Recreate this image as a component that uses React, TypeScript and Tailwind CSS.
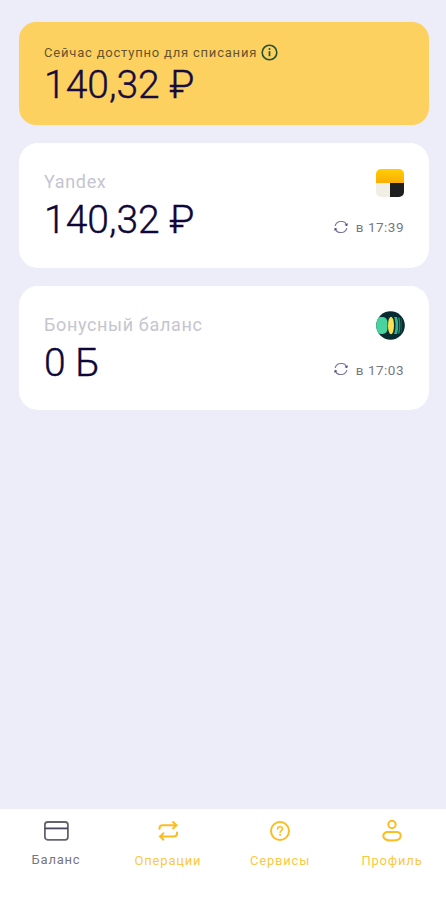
import React from 'react';
import { clsx } from 'clsx';

interface BalanceCardProps {
  title: string;
  amount: string;
  updatedAt: string;
  logo: React.ReactNode;
}

interface NavItemProps {
  label: string;
  icon: React.ReactNode;
  active?: boolean;
}

const InfoIcon = () => (
  <svg className="mb-px h-[17px] w-[17px]" viewBox="0 0 17 17" fill="none" stroke="#23502f" strokeWidth="1.6">
    <circle cx="8.5" cy="8.5" r="7.3" />
    <path d="M8.5 7.2v5" strokeWidth="1.7" />
    <circle cx="8.5" cy="4.9" r="1" fill="#23502f" stroke="none" />
  </svg>
);

const RefreshIcon = () => (
  <svg className="mb-px h-[14px] w-[14px]" viewBox="0 0 14 14" fill="none" stroke="#77749c" strokeWidth="1.2">
    <path d="M1.2 5.8c.2-1 .6-1.800 1.300-2.500C3.400 2.200 4.600 1.500 6 1.500h2c1.900 0 3.500 1.100 4.300 2.800" />
    <path d="M12.800 8.200c-.2 1-.6 1.800-1.300 2.500-.9 1.100-2.100 1.800-3.500 1.800H6c-1.900 0-3.500-1.100-4.300-2.800" />
    <path d="M13.900 3.300l-.7 3-2.800-1.300zM.1 10.700l.7-3L3.600 9z" fill="#4b4678" stroke="none" />
  </svg>
);

const YandexLogo = () => (
  <svg className="h-7 w-7" viewBox="0 0 28 28">
    <defs>
      <linearGradient id="yandexTop" x1="0" y1="0" x2="0" y2="1">
        <stop offset="0" stopColor="#ffcf00" />
        <stop offset="1" stopColor="#fbad08" />
      </linearGradient>
    </defs>
    <path d="M0 14V5a5 5 0 0 1 5-5h18a5 5 0 0 1 5 5v9z" fill="url(#yandexTop)" />
    <path d="M0 14h14v14H5a5 5 0 0 1-5-5z" fill="#f1eee6" />
    <path d="M14 14h14v9a5 5 0 0 1-5 5h-9z" fill="#1f1f1f" />
  </svg>
);

const BonusLogo = () => (
  <svg className="-mr-px h-[29px] w-[29px]" viewBox="0 0 29 29">
    <defs>
      <clipPath id="bonusClip">
        <circle cx="14.5" cy="14.5" r="14.3" />
      </clipPath>
    </defs>
    <g clipPath="url(#bonusClip)">
      <rect width="29" height="29" fill="#062c30" />
      <rect x="0" y="6" width="11.5" height="17" rx="5" fill="#48d3a0" />
      <ellipse cx="15" cy="14.5" rx="3" ry="8.7" fill="#fbe253" />
      <path d="M18 6c2 4.500 2 12.500 0 17h3c1.600-5 1.600-12 0-17z" fill="#35b28c" />
      <path d="M22 6.500c1.300 5 1.300 11 0 16h1.500c1.300-5 1.300-11 0-16z" fill="#238a72" />
      <path d="M24.500 7c1.200 5 1.200 10 0 15h.8c1.200-5 1.200-10 0-15z" fill="#1a6259" />
    </g>
  </svg>
);

const CardIcon = () => (
  <svg className="h-6 w-[26px]" viewBox="0 0 26 24" fill="none" stroke="#64646f" strokeWidth="1.8">
    <rect x="1.9" y="3" width="23" height="17.8" rx="2.8" />
    <path d="M1.9 9.400h23" stroke="#4a4860" />
  </svg>
);

const OperationsIcon = () => (
  <svg className="h-6 w-6" viewBox="0 0 24 24" fill="none" stroke="#fabd22" strokeWidth="2">
    <path d="M3.500 10.800V9.200a3 3 0 0 1 3-3h14M16.500 2.400l4 3.800-4 3.800" />
    <path d="M21 12.800v1.700a3 3 0 0 1-3 3H4M8 13.700l-4 3.800 4 3.800" />
  </svg>
);

const ServicesIcon = () => (
  <svg className="h-6 w-6" viewBox="0 0 24 24" fill="none" stroke="#fabd22" strokeWidth="2" strokeLinecap="round">
    <circle cx="12" cy="12" r="9" />
    <path d="M9.500 10c.1-1.500 1.100-2.300 2.500-2.300s2.600.8 2.600 2.100c0 1.700-2.300 1.700-2.500 3.500" strokeWidth="1.6" />
    <circle cx="12.100" cy="16" r="1" fill="#fabd22" stroke="none" />
  </svg>
);

const ProfileIcon = () => (
  <svg className="h-6 w-6" viewBox="0 0 24 24" fill="none" stroke="#fabd22" strokeWidth="2">
    <circle cx="12" cy="5.500" r="3.700" />
    <path d="M7.500 13h9c2.600 0 4.200 1.800 4.200 4 0 3.200-3.800 4.600-8.700 4.600S3.300 20.200 3.300 17c0-2.200 1.600-4 4.200-4z" />
  </svg>
);

const BalanceCard: React.FC<BalanceCardProps> = ({ title, amount, updatedAt, logo }) => (
  <section className="flex h-[124.5px] justify-between rounded-[19px] bg-white px-[25px]">
    <div className="pt-[27px]">
      <h2 className="text-[18px] leading-6 tracking-[0.65px] text-[#c5c5cf]">{title}</h2>
      <p className="mt-[3px] text-[39px] leading-[46px] font-light text-[#0f0738] [-webkit-text-stroke:0.4px_#0f0738]">
        {amount}
      </p>
    </div>
    <div className="flex flex-col items-end pt-[25px]">
      <div className="flex h-[29px] items-center">{logo}</div>
      <div className="mt-5 flex items-center gap-2">
        <RefreshIcon />
        <span className="text-[13.5px] leading-5 tracking-[0.5px] text-[#77777f]">{updatedAt}</span>
      </div>
    </div>
  </section>
);

const NavItem: React.FC<NavItemProps> = ({ label, icon, active }) => (
  <button className="flex flex-col items-center pt-[10px]">
    {icon}
    <span
      className={clsx(
        'text-[13px] leading-[18px] tracking-[0.8px]',
        active ? 'mt-2 text-[#777780]' : 'mt-[9px] text-[#fbc847]',
      )}
    >
      {label}
    </span>
  </button>
);

export default function App() {
  return (
    <div className="flex h-[900px] w-[446px] flex-col overflow-hidden bg-[#edecf9] font-['Roboto',sans-serif]">
      <main className="flex flex-1 flex-col gap-[18px] pt-[22px] pr-[17px] pl-[19px]">
        {/* Available amount */}
        <section className="h-[103px] rounded-[17px] bg-[#fdd15f] pt-[21px] pl-[25px]">
          <div className="flex items-center gap-1">
            <h1 className="text-[13px] leading-5 tracking-[0.8px] text-[#66542f]">
              Сейчас доступно для списания
            </h1>
            <InfoIcon />
          </div>
          <p className="-mt-px text-[39px] leading-[46px] font-light text-[#160b40] [-webkit-text-stroke:0.4px_#160b40]">
            140,32 ₽
          </p>
        </section>

        <BalanceCard title="Yandex" amount="140,32 ₽" updatedAt="в 17:39" logo={<YandexLogo />} />
        <BalanceCard title="Бонусный баланс" amount="0 Б" updatedAt="в 17:03" logo={<BonusLogo />} />
      </main>

      <nav className="grid h-[91px] grid-cols-[repeat(4,112px)] items-start bg-white">
        <NavItem label="Баланс" icon={<CardIcon />} active />
        <NavItem label="Операции" icon={<OperationsIcon />} />
        <NavItem label="Сервисы" icon={<ServicesIcon />} />
        <NavItem label="Профиль" icon={<ProfileIcon />} />
      </nav>
    </div>
  );
}
